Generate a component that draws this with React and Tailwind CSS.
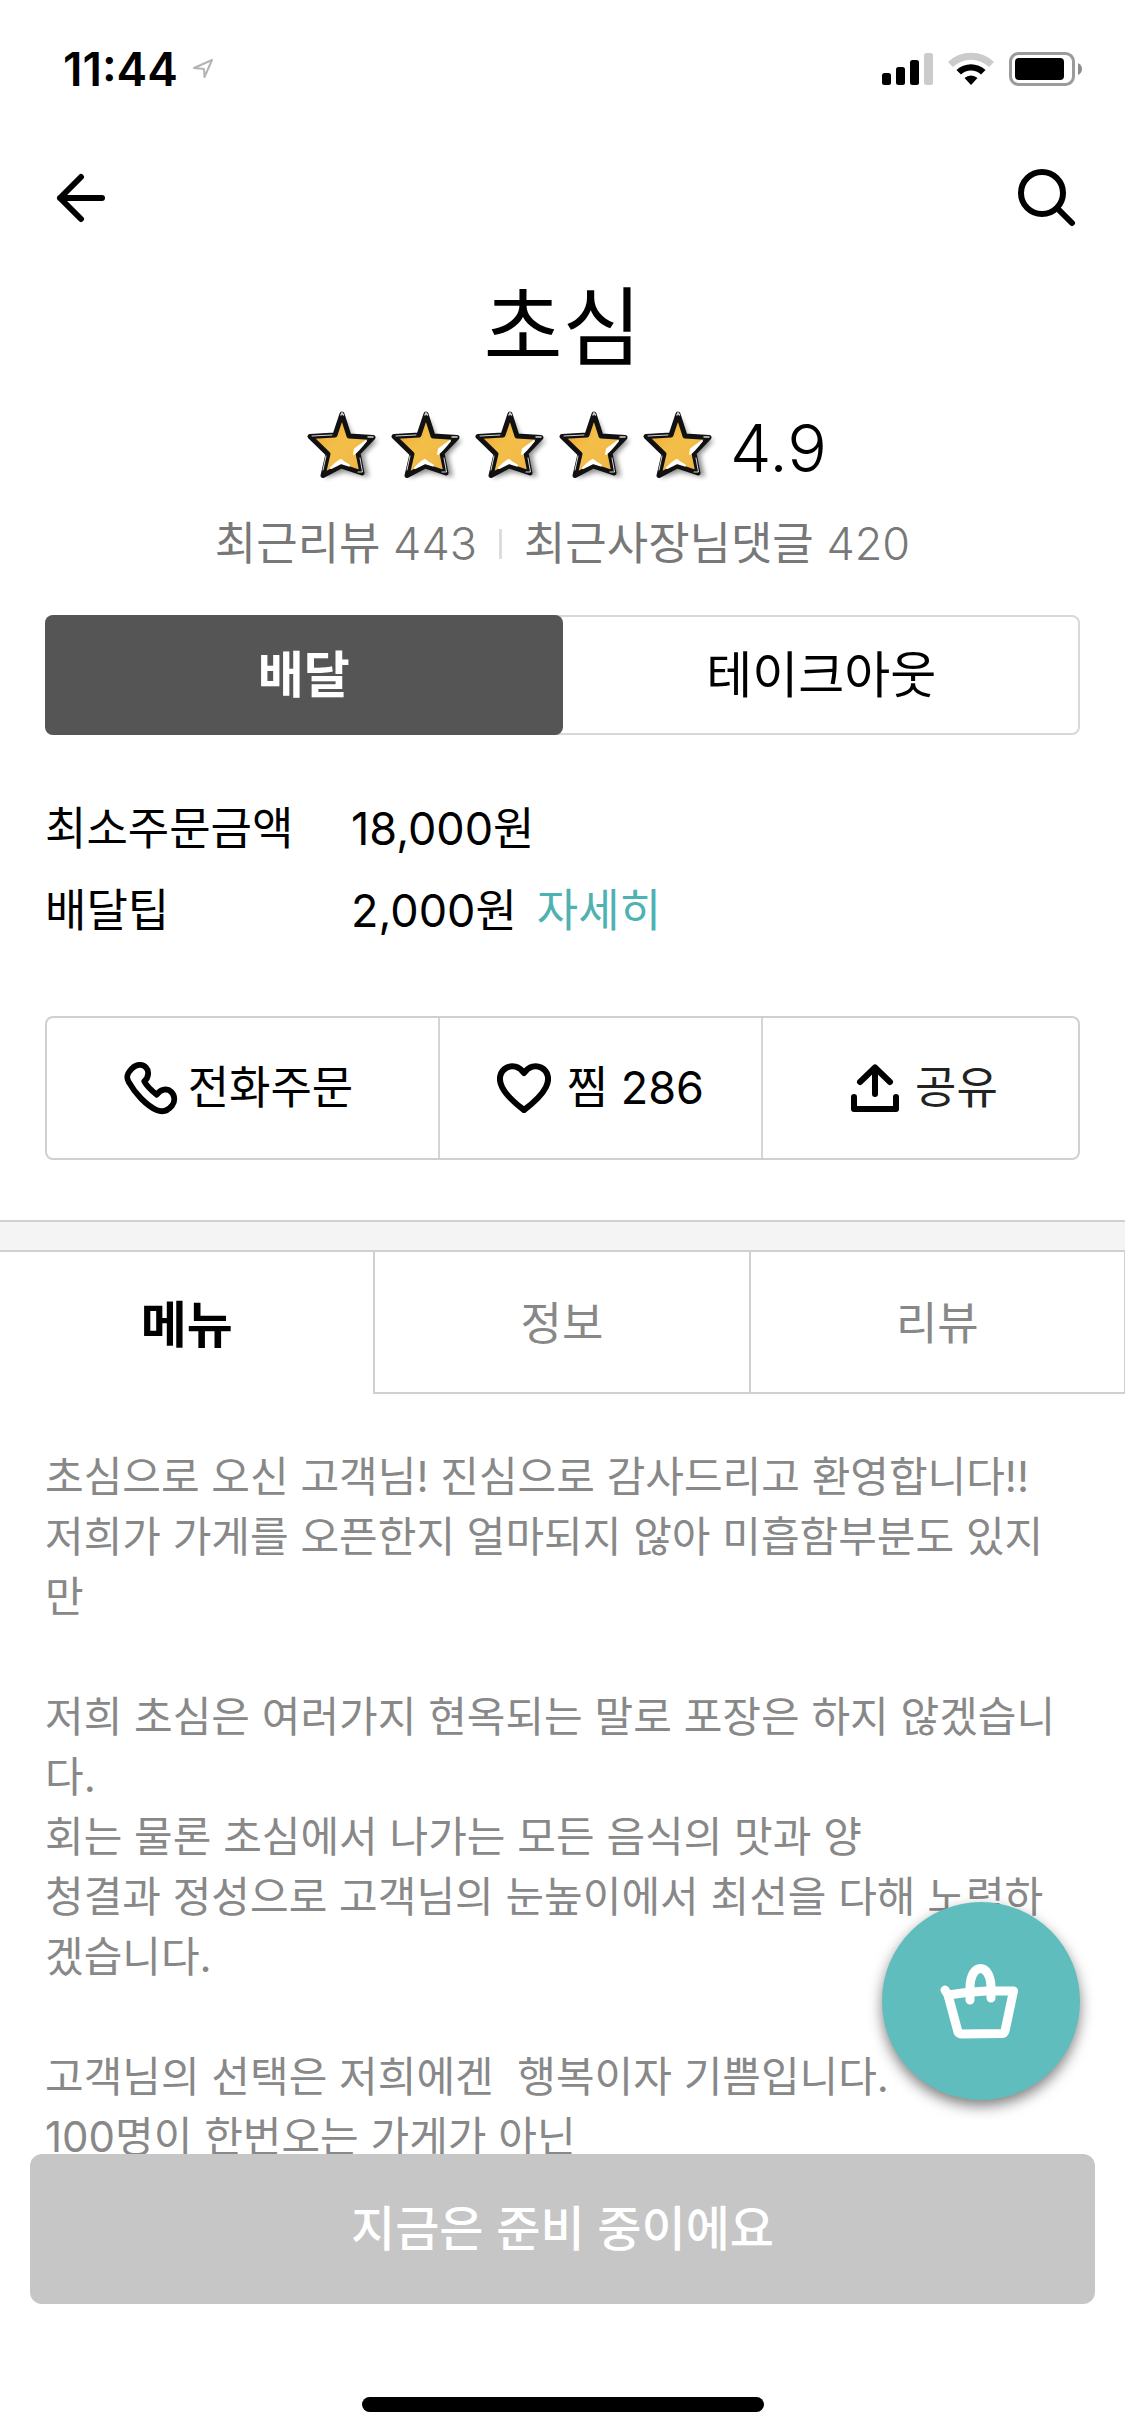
import { useState } from "react"

const notice = `초심으로 오신 고객님! 진심으로 감사드리고 환영합니다!!
저희가 가게를 오픈한지 얼마되지 않아 미흡함부분도 있지만

저희 초심은 여러가지 현옥되는 말로 포장은 하지 않겠습니다.
회는 물론 초심에서 나가는 모든 음식의 맛과 양
청결과 정성으로 고객님의 눈높이에서 최선을 다해 노력하겠습니다.

고객님의 선택은 저희에겐  행복이자 기쁨입니다.
100명이 한번오는 가게가 아닌`

function StatusBar() {
  return (
    <div className="h-[138px] shrink-0 flex items-center justify-between pl-[63px] pr-[43px]">
      <div className="flex items-center gap-[14px]">
        <span className="text-[46px] leading-none font-semibold">11:44</span>
        <svg width="22" height="22" viewBox="0 0 22 22" fill="none" stroke="#b4b4b4" strokeWidth="2" strokeLinejoin="round">
          <path d="M20 2 L2 10 L12 11 L12.500 19 Z" />
        </svg>
      </div>
      <div className="flex items-center gap-[15px]">
        <svg width="51" height="34" viewBox="0 0 51 34">
          <rect x="0" y="21" width="9" height="12" rx="2.500" />
          <rect x="14" y="15" width="9" height="18" rx="2.500" />
          <rect x="28" y="8" width="9" height="25" rx="2.500" />
          <rect x="42" y="1" width="9" height="32" rx="2.500" fill="#cbcbcb" />
        </svg>
        <svg width="46" height="34" viewBox="0 0 46 34">
          <path d="M0 10 A33 33 0 0 1 46 10 L41 15 A26 26 0 0 0 5 15 Z" fill="#cbcbcb" />
          <path d="M8.500 18 A21 21 0 0 1 37.500 18 L33 22.500 A14.500 14.500 0 0 0 13 22.500 Z" />
          <path d="M16.500 26 A9.500 9.500 0 0 1 29.500 26 L23 33 Z" />
        </svg>
        <svg width="73" height="34" viewBox="0 0 73 34">
          <rect x="1.500" y="1.500" width="63" height="31" rx="8" fill="none" stroke="#9b9b9b" strokeWidth="3" />
          <rect x="6" y="6" width="49" height="22" rx="4" />
          <path d="M69 11 Q73 13 73 17 Q73 21 69 23 Z" fill="#8d8d8d" />
        </svg>
      </div>
    </div>
  )
}

function Star() {
  return (
    <svg width="84" height="84" viewBox="-3 0 84 84">
      <defs>
        <linearGradient id="gold" x1="0" y1="0" x2="1" y2="1">
          <stop offset="0" stopColor="#f09a2f" />
          <stop offset="0.450" stopColor="#f3bf48" />
          <stop offset="1" stopColor="#f0b347" />
        </linearGradient>
        <filter id="soft" x="-20%" y="-20%" width="150%" height="150%">
          <feGaussianBlur stdDeviation="2.500" />
        </filter>
      </defs>
      <path d="M44 12 L52 32 L77 34 L63 49 L68 71 L43 66 L24 72 L30 50 Z" fill="#000" opacity="0.450" filter="url(#soft)" />
      <path
        d="M41 8 L48 30 L72 31.500 L57 47 L61 67 L40 60 L22 69.500 L27 48 L9 30.500 L34 29 Z"
        fill="url(#gold)"
        stroke="#111"
        strokeWidth="5"
        strokeLinejoin="round"
      />
      <path d="M65 35 L54 43 L53 48 Q57 45 65 35 Z" fill="#fff" stroke="#fff" strokeWidth="2" strokeLinejoin="round" />
      <path d="M30 62 Q36 56 40 54 Q43 57 48 59.500 L40 57 Z" fill="#fff" stroke="#fff" strokeWidth="2" strokeLinejoin="round" />
      <g fill="none" stroke="#d8d8d8" strokeLinecap="round">
        <path d="M40 9 L41 7 L42.500 9" strokeWidth="1.500" />
        <path d="M11 30 L31 29" strokeWidth="1" />
        <path d="M67 31 L72 31" strokeWidth="1.500" />
        <path d="M25 50 L22 64" strokeWidth="1" />
        <path d="M59 52 L61.500 66 L57 66" strokeWidth="1" />
      </g>
    </svg>
  )
}

function PhoneIcon() {
  return (
    <svg width="54" height="54" viewBox="0 0 56 56" fill="none" stroke="#000" strokeWidth="6" strokeLinejoin="round">
      <path d="M21 21 C26 17 26 10 23 7 C19 2 12 4 8 8 C3 13 2 17 5 22 C11 33 23 46 34 51 C41 54 46 51 50 46 C53 42 53 36 49 32 C45 28 38 29 34 35 C29 31 24 27 21 21 Z" />
    </svg>
  )
}

function HeartIcon() {
  return (
    <svg width="54" height="50" viewBox="0 0 54 50" fill="none" stroke="#000" strokeWidth="6" strokeLinejoin="round">
      <path d="M27 10 C22 3 15 2 10 4.500 C3 8 1 16 5 24 C9 32 19 41 27 47 C35 41 45 32 49 24 C53 16 51 8 44 4.500 C39 2 32 3 27 10 Z" />
    </svg>
  )
}

function ShareIcon() {
  return (
    <svg width="48" height="48" viewBox="0 0 48 48" fill="none" stroke="#000" strokeWidth="6" strokeLinecap="round" strokeLinejoin="round">
      <path d="M24 30 V4 M9 18 L24 3.500 L39 18 M3 33 V45 H45 V33" />
    </svg>
  )
}

function BasketIcon() {
  return (
    <svg width="78" height="76" viewBox="0 0 78 76" fill="none" stroke="#fff" strokeWidth="9" strokeLinecap="round" strokeLinejoin="round">
      <path d="M5 27 L8 32 L18 69 Q19 71 22 71 L62 70.500 Q64 70.500 65 68 L73.500 28 L46 28 Q26 29 8 32" />
      <path d="M30 37 V25 C30 -1 51 -1 51 25 V35" />
    </svg>
  )
}

export default function App() {
  const [method, setMethod] = useState("배달")
  const [tab, setTab] = useState("메뉴")

  return (
    <div className="h-screen flex flex-col bg-white text-black font-['Inter','Noto_Sans_CJK_KR',sans-serif]">
      <StatusBar />

      <header className="h-[120px] shrink-0 flex items-center justify-between px-12">
        <button type="button" aria-label="뒤로" className="p-2">
          <svg width="50" height="50" viewBox="0 0 50 50" fill="none" stroke="#000" strokeWidth="6" strokeLinecap="round" strokeLinejoin="round">
            <path d="M46 25 H4 M25 4 L4 25 L25 46" />
          </svg>
        </button>
        <button type="button" aria-label="검색">
          <svg width="60" height="58" viewBox="0 0 60 58" fill="none" stroke="#000" strokeWidth="6" strokeLinecap="round">
            <circle cx="25" cy="24" r="21" />
            <path d="M41 40 L55 54" />
          </svg>
        </button>
      </header>

      <main className="flex-1 min-h-0 overflow-y-auto [scrollbar-width:none]">
        <h1 className="mt-5 text-center text-[86px] leading-[100px]">초심</h1>

        <div className="mt-7 flex items-center justify-center">
          {[1, 2, 3, 4, 5].map(n => <Star key={n} />)}
          <span className="ml-3 text-[66px] leading-[84px] font-light">4.9</span>
        </div>

        <p className="mt-6 flex items-center justify-center text-[45px] leading-[60px] text-[#787878]">
          <span>최근리뷰 <span className="font-light">443</span></span>
          <span className="w-[3px] h-[30px] mx-[22px] bg-[#dcdcdc]" />
          <span>최근사장님댓글 <span className="font-light">420</span></span>
        </p>

        <div className="mt-[41px] mx-[45px] h-[120px] flex rounded-lg shadow-[inset_0_0_0_2px_#d8d8d8]">
          {["배달", "테이크아웃"].map(name => (
            <button
              key={name}
              type="button"
              onClick={() => setMethod(name)}
              className={`flex-1 rounded-lg text-[50px] ${method === name ? "bg-[#555555] text-white font-bold" : "font-normal"}`}
            >
              {name}
            </button>
          ))}
        </div>

        <dl className="mt-16 mx-[45px] grid grid-cols-[306px_1fr] gap-y-[22px] text-[45px] leading-[60px]">
          <dt>최소주문금액</dt>
          <dd>18,000원</dd>
          <dt>배달팁</dt>
          <dd className="flex gap-5">
            2,000원
            <a href="#tip" className="text-[#4fb2b2]">자세히</a>
          </dd>
        </dl>

        <div className="mt-[75px] mx-[45px] h-[144px] flex rounded-lg border-2 border-[#d0d0d0] divide-x-2 divide-[#d5d5d5] text-[45px]">
          <button type="button" className="grow-[384] basis-0 pr-2 flex items-center justify-center gap-[10px]">
            <PhoneIcon />
            전화주문
          </button>
          <button type="button" className="grow-[322] basis-0 flex items-center justify-center gap-4">
            <HeartIcon />
            찜 286
          </button>
          <button type="button" className="grow-[308] basis-0 pl-2 flex items-center justify-center gap-4 text-[#222222]">
            <ShareIcon />
            공유
          </button>
        </div>

        <div className="mt-[60px] h-8 bg-[#f4f4f4] border-y-2 border-[#d0d0d0]" />

        <div className="h-[142px] flex" role="tablist">
          {["메뉴", "정보", "리뷰"].map(name => (
            <button
              key={name}
              type="button"
              role="tab"
              aria-selected={tab === name}
              onClick={() => setTab(name)}
              className={`flex-1 pt-1 last:border-r ${tab === name ? "text-[50px] font-bold" : "text-[45px] text-[#888888] border-l-2 border-b-2 border-[#d0d0d0]"}`}
            >
              {name}
            </button>
          ))}
        </div>

        <p className="pt-[53px] px-[45px] text-[42px] leading-[60px] text-[#888888] whitespace-pre-wrap break-all">
          {notice}
        </p>
      </main>

      <footer className="relative shrink-0 px-[30px]">
        <button
          type="button"
          aria-label="장바구니"
          className="absolute bottom-full right-[45px] mb-[54px] w-[198px] h-[198px] pr-1 rounded-full bg-[#5fbdbd] flex items-center justify-center shadow-[0_6px_14px_rgba(0,0,0,0.5)]"
        >
          <BasketIcon />
        </button>
        <button type="button" className="w-full h-[150px] rounded-xl bg-[#c6c6c6] text-white text-[48px] font-medium">
          지금은 준비 중이에요
        </button>
        <div className="mt-[93px] mb-6 mx-auto w-[402px] h-[15px] rounded-full bg-black" />
      </footer>
    </div>
  )
}
